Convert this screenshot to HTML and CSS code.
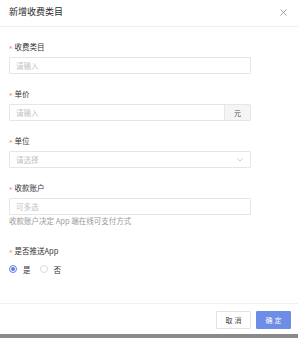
FILE: index.html
```html
<!DOCTYPE html>
<html lang="zh-CN">
<head>
    <meta charset="UTF-8">
    <meta name="viewport" content="width=device-width, initial-scale=1.0">
    <title>新增收费类目</title>
    <link rel="stylesheet" href="styles.css">
</head>
<body>
    <div class="dialog">
        <div class="dialog-header">
            <span class="dialog-title">新增收费类目</span>
            <svg class="close" width="7" height="7" viewBox="0 0 7 7">
                <path d="M0.5 0.5 L6.5 6.5 M6.5 0.5 L0.5 6.5" stroke="#9a9a9a" stroke-width="0.9" fill="none"/>
            </svg>
        </div>

        <div class="dialog-body">
            <div class="form-item">
                <div class="label"><span class="req">*</span>收费类目</div>
                <div class="input"><span class="placeholder">请输入</span></div>
            </div>

            <div class="form-item">
                <div class="label"><span class="req">*</span>单价</div>
                <div class="input input-group">
                    <span class="placeholder">请输入</span>
                    <span class="addon">元</span>
                </div>
            </div>

            <div class="form-item">
                <div class="label"><span class="req">*</span>单位</div>
                <div class="input select">
                    <span class="placeholder">请选择</span>
                    <svg class="arrow" width="6" height="4" viewBox="0 0 6 4">
                        <path d="M0.5 0.6 L3 3.2 L5.5 0.6" stroke="#bdbdbd" stroke-width="0.8" fill="none"/>
                    </svg>
                </div>
            </div>

            <div class="form-item with-help">
                <div class="label"><span class="req">*</span>收款账户</div>
                <div class="input"><span class="placeholder">可多选</span></div>
                <div class="help">收款账户决定 App 端在线可支付方式</div>
            </div>

            <div class="form-item">
                <div class="label"><span class="req">*</span>是否推送App</div>
                <div class="radios">
                    <label class="radio"><span class="dot checked"></span>是</label>
                    <label class="radio"><span class="dot"></span>否</label>
                </div>
            </div>
        </div>

        <div class="dialog-footer">
            <button class="btn">取消</button>
            <button class="btn btn-primary">确定</button>
        </div>
    </div>
    <div class="backdrop-edge"></div>
</body>
</html>
```

FILE: styles.css
```css
body {
    margin: 0;
    font-family: "Noto Sans CJK SC", "Noto Sans", sans-serif;
    color: #333;
    background: #fff;
}
.dialog {
    height: 334px;
    display: flex;
    flex-direction: column;
    background: #fff;
}
.dialog-header {
    height: 27px;
    border-bottom: 1px solid #efefef;
    display: flex;
    align-items: center;
    justify-content: space-between;
    padding: 0 11px 0 9px;
    box-sizing: border-box;
}
.dialog-title {
    font-size: 9px;
    color: #2b2b2b;
    line-height: 12px;
    margin-top: -2px;
}
.close {
    margin-top: -2px;
}
.dialog-body {
    flex: 1;
    padding: 15px 0 0 9px;
}
.form-item {
    margin-bottom: 15px;
}
.form-item.with-help {
    margin-bottom: 19px;
}
.label {
    font-size: 7.5px;
    line-height: 10px;
    height: 10px;
    margin-bottom: 5px;
    color: #333;
    display: flex;
    align-items: center;
}
.req {
    color: #f08a8a;
    margin: 3px 2px 0 0;
    font-size: 7px;
    font-family: "DejaVu Sans", sans-serif;
    line-height: 7px;
    height: 6px;
    overflow: hidden;
}
.input {
    width: 242px;
    height: 17px;
    box-sizing: border-box;
    border: 1px solid #e6e6e6;
    border-radius: 1px;
    display: flex;
    align-items: center;
    padding-left: 6px;
}
.placeholder {
    font-size: 7.5px;
    color: #c2c2c2;
}
.input-group {
    justify-content: space-between;
}
.addon {
    width: 25px;
    height: 100%;
    background: #f5f5f5;
    border-left: 1px solid #e6e6e6;
    display: flex;
    align-items: center;
    justify-content: center;
    font-size: 7px;
    color: #555;
}
.select {
    justify-content: space-between;
    padding-right: 7px;
}
.help {
    font-size: 7.5px;
    line-height: 12px;
    color: #999;
}
.radios {
    display: flex;
    align-items: center;
    height: 16px;
}
.radio {
    display: flex;
    align-items: center;
    font-size: 7.5px;
    color: #333;
    margin-right: 9px;
}
.dot {
    width: 8px;
    height: 8px;
    box-sizing: border-box;
    border: 1px solid #d9d9d9;
    border-radius: 50%;
    margin-right: 6px;
    position: relative;
}
.dot.checked {
    border-color: #5b7fe6;
}
.dot.checked::after {
    content: "";
    position: absolute;
    left: 1px;
    top: 1px;
    width: 4px;
    height: 4px;
    border-radius: 50%;
    background: #5b7fe6;
}
.dialog-footer {
    border-top: 1px solid #f0f0f0;
    display: flex;
    justify-content: flex-end;
    gap: 5px;
    padding: 7px 7px 5px 0;
}
.btn {
    width: 35px;
    height: 18px;
    padding: 0;
    font-family: inherit;
    font-size: 7px;
    letter-spacing: 2px;
    text-indent: 2px;
    border: 1px solid #e3e3e3;
    border-radius: 1px;
    background: #fff;
    color: #444;
}
.btn-primary {
    background: #6d8de6;
    border-color: #6d8de6;
    color: #fff;
}
.backdrop-edge {
    height: 4px;
    background: #8a8a8a;
}
```
